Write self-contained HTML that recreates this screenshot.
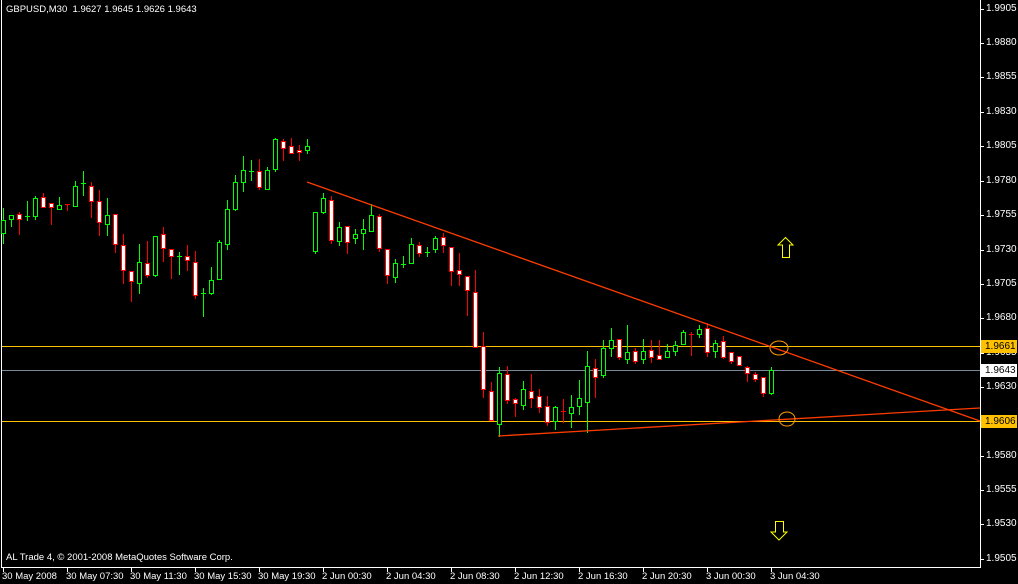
<!DOCTYPE html>
<html><head><meta charset="utf-8"><style>
html,body{margin:0;padding:0;background:#000;}
#w{position:relative;width:1018px;height:584px;overflow:hidden;background:#000;font-family:"Liberation Sans",sans-serif;font-size:9.5px;color:#fff;}
.t{position:absolute;white-space:nowrap;line-height:12px;}
.p{position:absolute;left:986px;line-height:12px;font-size:10px;}
.b{position:absolute;left:981px;width:36px;height:13px;line-height:13px;padding-left:4px;box-sizing:border-box;color:#000;font-size:10px;}
svg{position:absolute;left:0;top:0;}
</style></head><body><div id="w">
<svg id="s" width="1018" height="584" shape-rendering="crispEdges">
<rect x="1" y="0" width="1" height="568" fill="#fff"/>
<rect x="980" y="0" width="1" height="568" fill="#fff"/>
<rect x="1" y="567" width="980" height="1" fill="#fff"/>
<rect x="2" y="346" width="978" height="1" fill="#ffc000"/>
<rect x="2" y="421" width="978" height="1" fill="#ffc000"/>
<rect x="2" y="370" width="978" height="1" fill="#778899"/>
<g id="c"></g>
<line x1="307" y1="182" x2="980" y2="421" stroke="#ff3c00" stroke-width="1.3" shape-rendering="auto"/>
<line x1="498" y1="436" x2="980" y2="408" stroke="#ff3c00" stroke-width="1.3" shape-rendering="auto"/>
<ellipse cx="779" cy="348" rx="9" ry="7" fill="none" stroke="#ff9900" shape-rendering="auto"/>
<ellipse cx="787" cy="419" rx="8" ry="7" fill="none" stroke="#ff9900" shape-rendering="auto"/>
<path d="M785.5 237.5 L793 245 L789.5 245 L789.5 257.5 L782.5 257.5 L782.5 245 L778 245 Z" fill="none" stroke="#ffff00" shape-rendering="auto"/>
<path d="M775.5 521.5 L783.5 521.5 L783.5 532 L787 532 L779 540 L771 532 L775.5 532 Z" fill="none" stroke="#ffff00" shape-rendering="auto"/>
<g id="tk" fill="#fff"></g>
</svg>
<div class="t" style="left:6px;top:4px;">GBPUSD,M30&nbsp; 1.9627 1.9645 1.9626 1.9643</div>
<div class="t" style="left:6px;top:552px;">AL Trade 4, © 2001-2008 MetaQuotes Software Corp.</div>
<div class="p" style="top:3px">1.9905</div>
<div class="p" style="top:37px">1.9880</div>
<div class="p" style="top:71px">1.9855</div>
<div class="p" style="top:106px">1.9830</div>
<div class="p" style="top:140px">1.9805</div>
<div class="p" style="top:175px">1.9780</div>
<div class="p" style="top:209px">1.9755</div>
<div class="p" style="top:244px">1.9730</div>
<div class="p" style="top:278px">1.9705</div>
<div class="p" style="top:312px">1.9680</div>
<div class="p" style="top:347px">1.9655</div>
<div class="p" style="top:381px">1.9630</div>
<div class="p" style="top:450px">1.9580</div>
<div class="p" style="top:484px">1.9555</div>
<div class="p" style="top:518px">1.9530</div>
<div class="p" style="top:553px">1.9505</div>
<div class="b" style="top:340px;background:#ffc000;">1.9661</div>
<div class="b" style="top:364px;background:#fff;">1.9643</div>
<div class="b" style="top:415px;background:#ffc000;">1.9606</div>
<div class="t" style="left:2px;top:571px">30 May 2008</div>
<div class="t" style="left:66px;top:571px">30 May 07:30</div>
<div class="t" style="left:130px;top:571px">30 May 11:30</div>
<div class="t" style="left:194px;top:571px">30 May 15:30</div>
<div class="t" style="left:258px;top:571px">30 May 19:30</div>
<div class="t" style="left:322px;top:571px">2 Jun 00:30</div>
<div class="t" style="left:386px;top:571px">2 Jun 04:30</div>
<div class="t" style="left:450px;top:571px">2 Jun 08:30</div>
<div class="t" style="left:514px;top:571px">2 Jun 12:30</div>
<div class="t" style="left:578px;top:571px">2 Jun 16:30</div>
<div class="t" style="left:642px;top:571px">2 Jun 20:30</div>
<div class="t" style="left:706px;top:571px">3 Jun 00:30</div>
<div class="t" style="left:770px;top:571px">3 Jun 04:30</div>
</div>
<script>
var D=[
['g',220,233,208,243],['g',215,219,215,226],['r',214,219,212,234],['g',216,216,201,220],['g',198,216,196,219],
['r',197,207,193,207],['r',203,207,203,224],['g',205,209,197,209],['r',204,204,204,210],['g',186,206,181,206],
['g',183,183,171,195],['r',186,201,182,217],['r',201,222,190,235],['g',215,224,198,235],['r',214,244,214,252],
['r',245,270,234,283],['r',271,281,271,301],['g',262,283,244,293],['r',263,275,241,277],['g',236,275,236,276],
['r',234,248,227,261],['r',249,256,249,278],['g',256,256,252,274],['r',256,260,245,270],['r',262,295,251,298],
['g',293,293,288,316],['g',280,293,267,294],['g',242,279,240,279],['g',209,244,200,249],['g',182,209,175,210],
['g',170,182,156,191],['g',171,171,160,180],['r',171,187,159,189],['g',170,189,167,189],['g',139,169,138,171],
['r',141,148,139,160],['r',146,153,138,153],['r',150,152,145,160],['g',146,150,139,153],['g',212,251,212,253],
['g',198,212,193,213],['r',200,240,196,243],['g',227,241,222,245],['r',226,242,226,253],['g',234,238,229,243],
['g',229,233,219,249],['g',215,231,204,231],['r',216,248,214,251],['r',249,275,249,283],['g',263,277,259,282],
['g',264,264,256,267],['g',244,263,238,263],['r',245,253,242,256],['g',252,252,247,256],['g',238,249,236,252],
['r',237,245,233,252],['r',247,271,247,285],['r',270,274,253,285],['r',276,290,276,315],['r',292,347,270,347],
['r',346,389,332,397],['r',391,420,382,420],['g',373,424,367,436],['r',374,400,366,403],['r',399,403,398,416],
['g',389,405,381,409],['r',391,398,374,407],['r',396,407,389,412],['r',406,422,396,425],['g',407,421,406,429],
['r',411,411,399,422],['g',407,413,395,427],['g',398,406,380,414],['g',366,402,351,432],['r',368,377,359,397],
['g',348,375,340,377],['g',340,348,328,356],['r',339,357,339,359],['g',352,359,325,363],['r',351,361,348,363],
['g',351,359,339,363],['r',350,357,340,362],['r',355,359,340,359],['g',351,357,344,357],['g',345,351,341,355],
['g',332,344,330,344],['r',334,334,332,355],['g',329,334,325,337],['r',328,352,323,356],['g',343,351,340,357],
['r',341,357,336,358],['r',352,361,352,363],['r',356,365,356,365],['r',367,373,366,381],['r',374,379,372,381],
['r',377,393,377,396],['g',370,393,367,394]];
var h='';
D.forEach(function(d,k){var c=3+8*k,col=d[0]=='g'?'#00ff00':'#ff0000',fill=d[0]=='g'?'#000':'#fff';
h+='<rect x="'+c+'" y="'+d[3]+'" width="1" height="'+(d[4]-d[3]+1)+'" fill="'+col+'"/>';
if(d[2]-d[1]<2){h+='<rect x="'+(c-2)+'" y="'+d[1]+'" width="5" height="'+(d[2]-d[1]+1)+'" fill="'+col+'"/>';}
else{h+='<rect x="'+(c-2)+'" y="'+d[1]+'" width="5" height="'+(d[2]-d[1]+1)+'" fill="'+col+'"/><rect x="'+(c-1)+'" y="'+(d[1]+1)+'" width="3" height="'+(d[2]-d[1]-1)+'" fill="'+fill+'"/>';}
});
document.getElementById('c').innerHTML=h;
var t='';for(var i=0;i<13;i++){t+='<rect x="'+(3+64*i)+'" y="568" width="1" height="4"/>';}
[9,43,77,112,146,181,215,250,284,318,353,387,456,490,524,559].forEach(function(y){t+='<rect x="980" y="'+y+'" width="4" height="1"/>';});
document.getElementById('tk').innerHTML=t;
</script>
</body></html>
